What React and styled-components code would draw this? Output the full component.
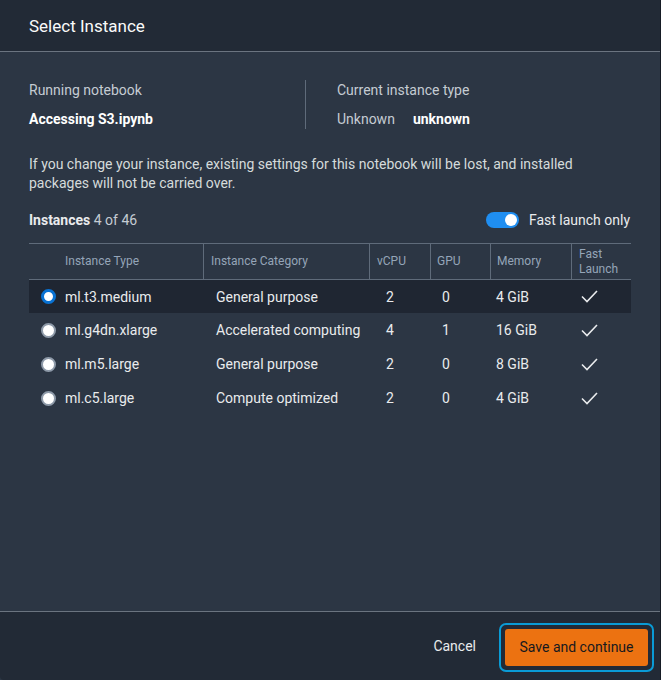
import React, { useState } from "react";
import styled, { createGlobalStyle } from "styled-components";

const Global = createGlobalStyle`
  html, body { margin: 0; padding: 0; background: #2c3644; }
  body { font-family: Roboto, "Noto Sans", sans-serif; -webkit-font-smoothing: antialiased; }
  * { box-sizing: border-box; }
`;

const Modal = styled.div`
  width: 661px;
  height: 680px;
  display: flex;
  flex-direction: column;
  background: #2c3644;
  border-right: 1px solid #161c25;
  border-bottom-left-radius: 4px;
  overflow: hidden;
  color: #d5dbdb;
  font-size: 14px;
`;

const Header = styled.div`
  height: 52px;
  flex: none;
  display: flex;
  align-items: center;
  padding: 1px 29px 0;
  background: #222a36;
  border-bottom: 1px solid #6b7480;
`;

const Title = styled.h1`
  margin: 0;
  font-size: 17px;
  font-weight: 400;
  color: #fafafa;
`;

const Body = styled.div`
  flex: 1;
  padding: 28px 29px 0;
  display: flex;
  flex-direction: column;
`;

const InfoRow = styled.div`
  display: grid;
  grid-template-columns: 276px 1fr;
`;

const InfoCol = styled.div`
  display: flex;
  flex-direction: column;
  gap: 9px;
  padding-left: ${(p) => (p.$divided ? "31px" : "0")};
  border-left: ${(p) => (p.$divided ? "1px solid #5f6b7a" : "none")};
`;

const Label = styled.div`
  line-height: 20px;
  color: #c5ccd3;
`;

const Value = styled.div`
  line-height: 20px;
  display: flex;
  gap: 18px;
  color: #c5ccd3;
`;

const Strong = styled.span`
  font-weight: 700;
  color: #ffffff;
`;

const Notice = styled.p`
  margin: 26px 0 0;
  line-height: 19px;
  color: #d5dbdb;
`;

const TableBar = styled.div`
  margin-top: 17px;
  display: flex;
  align-items: center;
  justify-content: space-between;
  height: 20px;
`;

const Count = styled.div`
  color: #c5ccd3;
  b { color: #e9ebed; font-weight: 700; }
`;

const ToggleWrap = styled.label`
  display: flex;
  align-items: center;
  gap: 10px;
  color: #e9ebed;
  margin-right: 1px;
  margin-left: -3px;
`;

const Track = styled.span`
  width: 33px;
  height: 16px;
  border-radius: 8px;
  background: ${(p) => (p.$on ? "#1f8ef1" : "#5f6b7a")};
  position: relative;
  display: inline-block;
`;

const Knob = styled.span`
  position: absolute;
  top: 2px;
  left: ${(p) => (p.$on ? "19px" : "2px")};
  width: 12px;
  height: 12px;
  border-radius: 50%;
  background: #ffffff;
`;

const Table = styled.div`
  margin-top: 13px;
  display: grid;
  grid-template-columns: 174px 166px 61px 60px 81px 60px;
  border-top: 1px solid #5f6b7a;
`;

const HeadCell = styled.div`
  height: 36px;
  display: flex;
  align-items: center;
  padding-left: ${(p) => p.$pad || "7px"};
  font-size: 12px;
  line-height: 15px;
  color: #95a5b8;
  border-bottom: 1px solid #5f6b7a;
  border-left: ${(p) => (p.$first ? "none" : "1px solid #5f6b7a")};
`;

const Row = styled.div`
  display: contents;
`;

const Cell = styled.div`
  height: ${(p) => (p.$first ? "33px" : "34px")};
  display: flex;
  align-items: center;
  padding-left: ${(p) => p.$pad || "6px"};
  background: ${(p) => (p.$selected ? "#1f2632" : "transparent")};
  color: #e9ebed;
  cursor: pointer;
`;

const Radio = styled.span`
  width: 15px;
  height: 15px;
  border-radius: 50%;
  flex: none;
  margin-right: 9px;
  background: #ffffff;
  border: ${(p) => (p.$checked ? "3px solid #0972d3" : "2px solid #8d99a8")};
`;

const Footer = styled.div`
  height: 69px;
  flex: none;
  display: flex;
  align-items: center;
  justify-content: flex-end;
  gap: 23px;
  padding: 0 6px 0 0;
  background: #222a36;
  border-top: 1px solid #6b7480;
`;

const TextButton = styled.button`
  background: none;
  border: none;
  font: inherit;
  font-size: 14px;
  color: #e9ebed;
  padding: 0;
  cursor: pointer;
`;

const FocusRing = styled.div`
  padding: 4px;
  border: 2px solid #0a9bd6;
  border-radius: 7px;
  margin-top: 2px;
`;

const PrimaryButton = styled.button`
  width: 143px;
  height: 37px;
  background: #ec7211;
  border: none;
  border-radius: 3px;
  font: inherit;
  font-size: 14px;
  color: #16191f;
  cursor: pointer;
`;

const Check = () => (
  <svg width="17" height="13" viewBox="0 0 17 13" fill="none">
    <path d="M1 6.5 L6 11.5 L16 1" stroke="#e9ebed" strokeWidth="1.6" />
  </svg>
);

const rows = [
  ["ml.t3.medium", "General purpose", "2", "0", "4 GiB"],
  ["ml.g4dn.xlarge", "Accelerated computing", "4", "1", "16 GiB"],
  ["ml.m5.large", "General purpose", "2", "0", "8 GiB"],
  ["ml.c5.large", "Compute optimized", "2", "0", "4 GiB"],
];

export default function App() {
  const [sel, setSel] = useState(0);
  return (
    <>
      <Global />
      <Modal>
        <Header>
          <Title>Select Instance</Title>
        </Header>
        <Body>
          <InfoRow>
            <InfoCol>
              <Label>Running notebook</Label>
              <Value>
                <Strong>Accessing S3.ipynb</Strong>
              </Value>
            </InfoCol>
            <InfoCol $divided>
              <Label>Current instance type</Label>
              <Value>
                <span>Unknown</span>
                <Strong>unknown</Strong>
              </Value>
            </InfoCol>
          </InfoRow>
          <Notice>
            If you change your instance, existing settings for this notebook will be lost, and installed
            packages will not be carried over.
          </Notice>
          <TableBar>
            <Count>
              <b>Instances</b> 4 of 46
            </Count>
            <ToggleWrap>
              <Track $on>
                <Knob $on />
              </Track>
              Fast launch only
            </ToggleWrap>
          </TableBar>
          <Table>
            <HeadCell $first $pad="36px">Instance Type</HeadCell>
            <HeadCell>Instance Category</HeadCell>
            <HeadCell>vCPU</HeadCell>
            <HeadCell $pad="6px">GPU</HeadCell>
            <HeadCell $pad="6px">Memory</HeadCell>
            <HeadCell>
              Fast
              <br />
              Launch
            </HeadCell>
            {rows.map((r, i) => (
              <Row key={r[0]} onClick={() => setSel(i)}>
                <Cell $first={i === 0} $selected={sel === i} $pad="12px">
                  <Radio $checked={sel === i} />
                  {r[0]}
                </Cell>
                <Cell $first={i === 0} $selected={sel === i} $pad="13px">{r[1]}</Cell>
                <Cell $first={i === 0} $selected={sel === i} $pad="17px">{r[2]}</Cell>
                <Cell $first={i === 0} $selected={sel === i} $pad="12px">{r[3]}</Cell>
                <Cell $first={i === 0} $selected={sel === i} $pad="6px">{r[4]}</Cell>
                <Cell $first={i === 0} $selected={sel === i} $pad="10px">
                  <Check />
                </Cell>
              </Row>
            ))}
          </Table>
        </Body>
        <Footer>
          <TextButton>Cancel</TextButton>
          <FocusRing>
            <PrimaryButton>Save and continue</PrimaryButton>
          </FocusRing>
        </Footer>
      </Modal>
    </>
  );
}
